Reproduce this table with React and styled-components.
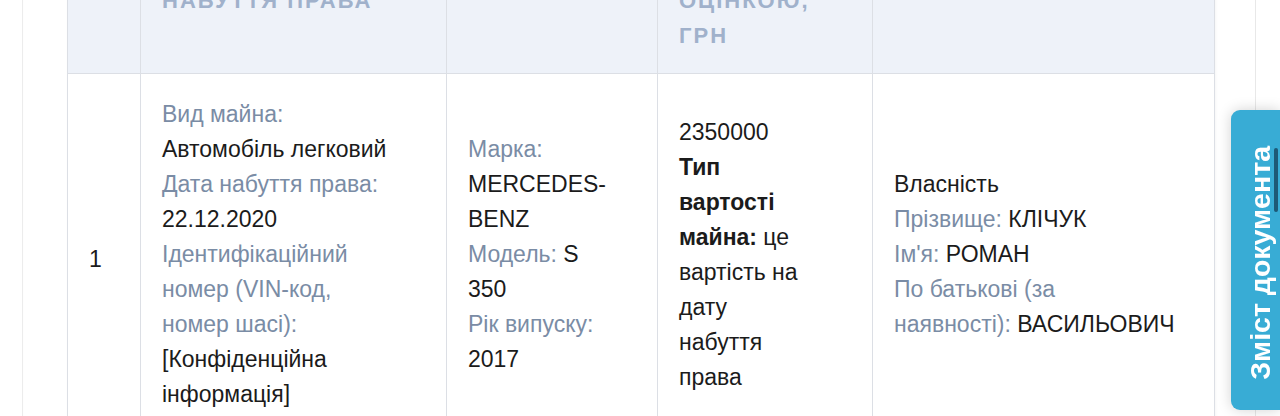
import React from "react";
import styled, { createGlobalStyle } from "styled-components";

const GlobalStyle = createGlobalStyle`
  body {
    margin: 0;
    background: #ffffff;
    font-family: "Liberation Sans", Arial, sans-serif;
    overflow: hidden;
  }
`;

const Page = styled.div`
  display: flex;
  margin-top: -177px;
  min-height: 700px;
`;

const Gutter = styled.div`
  width: 22px;
  flex: none;
  border-right: 1px solid #ececec;
  box-shadow: -3px 0 6px rgba(0, 0, 0, 0.03);
`;

const Main = styled.div`
  flex: none;
  width: 1233px;
  box-sizing: border-box;
  padding-left: 44px;
  border-right: 1px solid #e8e8e8;
`;

const Table = styled.table`
  width: 1147px;
  border-collapse: collapse;
  table-layout: fixed;
  box-shadow: 1px 0 3px rgba(0, 0, 0, 0.04);
`;

const HeadCell = styled.th`
  box-sizing: border-box;
  width: ${(p) => p.$w}px;
  background: #eef2f9;
  border: 1px solid #dcdfe5;
  border-top: none;
  padding: 20px 21px;
  text-align: left;
  vertical-align: middle;
  font-size: 22px;
  line-height: 35px;
  font-weight: 700;
  letter-spacing: 2px;
  color: #a0b1cb;
  white-space: nowrap;
  overflow: hidden;
`;

const Cell = styled.td`
  border: 1px solid #dcdfe5;
  padding: ${(p) => (p.$num ? "33px" : "23px")} 20px 21px 21px;
  vertical-align: middle;
  font-size: 23px;
  line-height: 35px;
  color: #1b1b1b;
`;

const Line = styled.div`
  white-space: nowrap;
`;

const Label = styled.span`
  color: #7a8ca5;
`;

const Strong = styled.span`
  font-weight: 700;
`;

const SideTab = styled.div`
  position: fixed;
  top: 110px;
  right: 0;
  width: 49px;
  height: 300px;
  box-sizing: border-box;
  background: #38acd5;
  border-radius: 9px 0 0 9px;
  box-shadow: 0 0 14px rgba(0, 0, 0, 0.18);
  display: flex;
  justify-content: center;
  align-items: flex-start;
  padding: 36px 0 0 10px;
`;

const TabText = styled.div`
  writing-mode: vertical-rl;
  transform: rotate(180deg);
  color: #ffffff;
  font-size: 28.5px;
  font-weight: 700;
  white-space: nowrap;
`;

const TabThumb = styled.div`
  position: absolute;
  top: 38px;
  right: 2px;
  width: 4px;
  height: 64px;
  border-radius: 2px;
  background: #1d5976;
`;

const headers = [
  { w: 73, lines: ["№"] },
  { w: 306, lines: ["ВИД", "МАЙНА,", "ДАТА", "НАБУТТЯ ПРАВА"] },
  { w: 211, lines: ["ІНФОРМАЦІЯ"] },
  { w: 215, lines: ["ВАРТІСТЬ", "НА ДАТУ", "НАБУТТЯ", "АБО ЗА", "ОЦІНКОЮ,", "ГРН"] },
  { w: 342, lines: ["ПРАВА НА", "МАЙНО"] },
];

const App = () => (
  <>
    <GlobalStyle />
    <Page>
      <Gutter />
      <Main>
        <Table>
          <thead>
            <tr>
              {headers.map((h, i) => (
                <HeadCell key={i} $w={h.w}>
                  {h.lines.map((l) => (
                    <Line key={l}>{l}</Line>
                  ))}
                </HeadCell>
              ))}
            </tr>
          </thead>
          <tbody>
            <tr>
              <Cell $num>1</Cell>
              <Cell>
                <Line><Label>Вид майна:</Label></Line>
                <Line>Автомобіль легковий</Line>
                <Line><Label>Дата набуття права:</Label></Line>
                <Line>22.12.2020</Line>
                <Line><Label>Ідентифікаційний</Label></Line>
                <Line><Label>номер (VIN-код,</Label></Line>
                <Line><Label>номер шасі):</Label></Line>
                <Line>[Конфіденційна</Line>
                <Line>інформація]</Line>
              </Cell>
              <Cell>
                <Line><Label>Марка:</Label></Line>
                <Line>MERCEDES-</Line>
                <Line>BENZ</Line>
                <Line><Label>Модель:</Label> S</Line>
                <Line>350</Line>
                <Line><Label>Рік випуску:</Label></Line>
                <Line>2017</Line>
              </Cell>
              <Cell>
                <Line>2350000</Line>
                <Line><Strong>Тип</Strong></Line>
                <Line><Strong>вартості</Strong></Line>
                <Line><Strong>майна:</Strong> це</Line>
                <Line>вартість на</Line>
                <Line>дату</Line>
                <Line>набуття</Line>
                <Line>права</Line>
              </Cell>
              <Cell>
                <Line>Власність</Line>
                <Line><Label>Прізвище:</Label> КЛІЧУК</Line>
                <Line><Label>Ім'я:</Label> РОМАН</Line>
                <Line><Label>По батькові (за</Label></Line>
                <Line><Label>наявності):</Label> ВАСИЛЬОВИЧ</Line>
              </Cell>
            </tr>
          </tbody>
        </Table>
      </Main>
    </Page>
    <SideTab>
      <TabText>Зміст документа</TabText>
      <TabThumb />
    </SideTab>
  </>
);

export default App;
